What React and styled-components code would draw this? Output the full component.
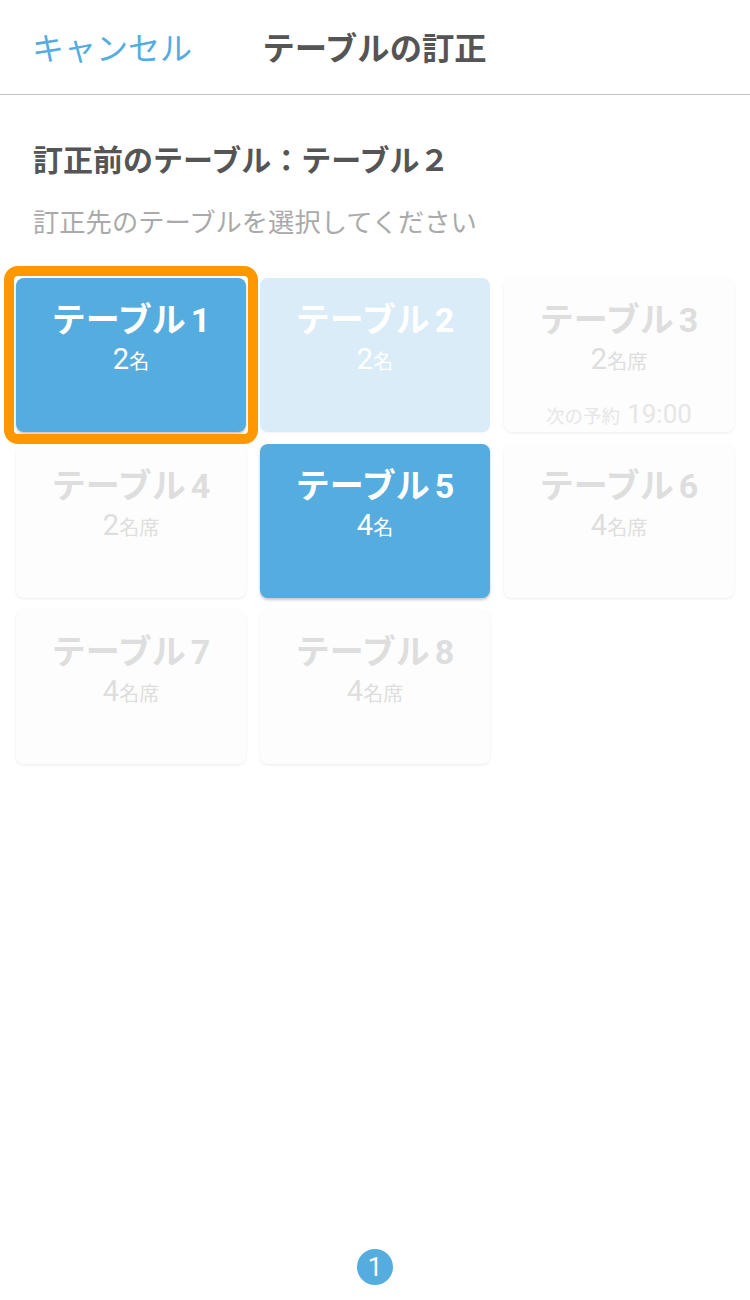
import styled, { createGlobalStyle, css } from "styled-components";

const GlobalStyle = createGlobalStyle`
  body {
    margin: 0;
    background: #fff;
    font-family: Roboto, "Noto Sans CJK JP", "Noto Sans", sans-serif;
  }
`;

const Page = styled.div`
  min-height: 1300px;
  display: flex;
  flex-direction: column;
  background: #fff;
`;

const Header = styled.header`
  height: 94px;
  border-bottom: 1px solid #c4c4c4;
  display: grid;
  grid-template-columns: 1fr auto 1fr;
  align-items: center;
  padding: 0 33px 0 32px;
`;

const CancelButton = styled.span`
  font-size: 32px;
  color: #55acdf;
  padding-bottom: 2px;
`;

const HeaderTitle = styled.h1`
  margin: 0 0 2px;
  font-size: 32.3px;
  font-weight: 700;
  color: #555;
`;

const Intro = styled.div`
  padding: 46px 33px 0;
`;

const Heading = styled.h2`
  margin: 0;
  font-size: 30px;
  line-height: 40px;
  font-weight: 700;
  color: #555;
`;

const Hint = styled.p`
  margin: 24px 0 0;
  font-size: 26.3px;
  line-height: 36px;
  color: #aaa;
`;

const Grid = styled.div`
  display: grid;
  grid-template-columns: repeat(3, 230px);
  column-gap: 14px;
  row-gap: 12px;
  padding: 37px 16px 0;
`;

const variants = {
  selected: css`
    background: #55acdf;
    color: #fff;
    box-shadow: 0 2px 3px rgba(0, 0, 0, 0.22);
  `,
  current: css`
    background: #d9ecf8;
    color: #fff;
    box-shadow: 0 1px 2px rgba(0, 0, 0, 0.05);
  `,
  disabled: css`
    background: #fdfdfd;
    color: #dedede;
    box-shadow: 0 1px 3px rgba(0, 0, 0, 0.08);
  `,
};

const Card = styled.div`
  position: relative;
  height: 154px;
  border-radius: 8px;
  display: flex;
  flex-direction: column;
  align-items: center;
  padding-top: 19px;
  box-sizing: border-box;
  ${(p) => variants[p.$variant]}
`;

const Highlight = styled.div`
  position: absolute;
  inset: -12px;
  border: 10px solid #ff9800;
  border-radius: 14px;
  pointer-events: none;
  z-index: 2;
`;

const CardTitle = styled.div`
  font-size: 34px;
  line-height: 46px;
  font-weight: 700;
`;

const TableNumber = styled.span`
  margin-left: 5px;
`;

const Seats = styled.div`
  font-size: 29px;
  line-height: 34px;
  margin-top: -1px;
`;

const SeatUnit = styled.span`
  font-size: 20px;
`;

const Reservation = styled.div`
  margin-top: auto;
  margin-bottom: -2px;
  color: #e6e6e6;
  font-size: 26px;
  line-height: 34px;
`;

const ReservationLabel = styled.span`
  font-size: 18.5px;
  margin-right: 7px;
`;

const Footer = styled.div`
  margin-top: auto;
  display: flex;
  justify-content: center;
  padding-bottom: 15px;
`;

const PageBadge = styled.div`
  width: 36px;
  height: 36px;
  border-radius: 50%;
  background: #55acdf;
  color: #fff;
  font-size: 26px;
  line-height: 36px;
  text-align: center;
`;

const tables = [
  { no: 1, count: 2, unit: "名", variant: "selected", highlight: true },
  { no: 2, count: 2, unit: "名", variant: "current" },
  { no: 3, count: 2, unit: "名席", variant: "disabled", next: "19:00" },
  { no: 4, count: 2, unit: "名席", variant: "disabled" },
  { no: 5, count: 4, unit: "名", variant: "selected" },
  { no: 6, count: 4, unit: "名席", variant: "disabled" },
  { no: 7, count: 4, unit: "名席", variant: "disabled" },
  { no: 8, count: 4, unit: "名席", variant: "disabled" },
];

export default function App() {
  return (
    <Page>
      <GlobalStyle />
      <Header>
        <CancelButton>キャンセル</CancelButton>
        <HeaderTitle>テーブルの訂正</HeaderTitle>
        <span />
      </Header>
      <Intro>
        <Heading>訂正前のテーブル：テーブル２</Heading>
        <Hint>訂正先のテーブルを選択してください</Hint>
      </Intro>
      <Grid>
        {tables.map((t) => (
          <Card key={t.no} $variant={t.variant}>
            {t.highlight && <Highlight />}
            <CardTitle>
              テーブル<TableNumber>{t.no}</TableNumber>
            </CardTitle>
            <Seats>
              {t.count}
              <SeatUnit>{t.unit}</SeatUnit>
            </Seats>
            {t.next && (
              <Reservation>
                <ReservationLabel>次の予約</ReservationLabel>
                {t.next}
              </Reservation>
            )}
          </Card>
        ))}
      </Grid>
      <Footer>
        <PageBadge>1</PageBadge>
      </Footer>
    </Page>
  );
}
